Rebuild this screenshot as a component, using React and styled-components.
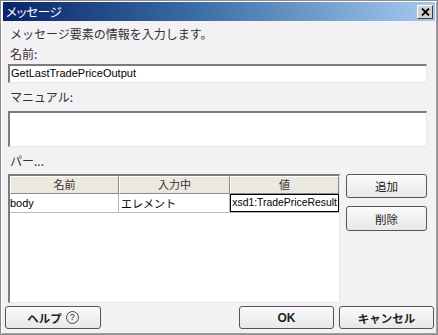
import React from "react";
import styled, { createGlobalStyle } from "styled-components";

const Global = createGlobalStyle`
  html, body { margin: 0; padding: 0; background: #ffffff; }
  * { box-sizing: border-box; }
`;

const jp = `"Noto Sans CJK JP", "Liberation Sans", sans-serif`;
const latin = `"Liberation Sans", "Noto Sans CJK JP", sans-serif`;

const Window = styled.div`
  width: 438px;
  height: 335px;
  background: #f3f1f4;
  border: 1px solid #8c8c8c;
  box-shadow: inset 1px 1px 0 #ffffff, inset -1px -1px 0 #a0a0a0;
  padding: 1px 2px 2px 2px;
  display: flex;
  flex-direction: column;
  font-family: ${jp};
  color: #222;
`;

const TitleBar = styled.div`
  height: 19px;
  background: linear-gradient(to right, #0a246a 0%, #3a6ea5 45%, #a6caf0 100%);
  display: flex;
  align-items: center;
  justify-content: space-between;
  padding: 0 2px 0 3px;
`;

const Title = styled.span`
  color: #ffffff;
  font-size: 12.5px;
  font-feature-settings: "palt";
  letter-spacing: -0.3px;
`;

const CloseButton = styled.div`
  width: 16px;
  height: 14px;
  background: #d4d0c8;
  border-top: 1px solid #ffffff;
  border-left: 1px solid #ffffff;
  border-right: 1px solid #404040;
  border-bottom: 1px solid #404040;
  display: flex;
  align-items: center;
  justify-content: center;
`;

const Body = styled.div`
  flex: 1;
  display: flex;
  flex-direction: column;
  padding: 0 8px 0 5px;
`;

const Description = styled.div`
  margin-top: 1px;
  height: 24px;
  line-height: 24px;
  font-size: 12px;
  padding-left: 2px;
  color: #333;
`;

const Label = styled.div`
  height: ${(p) => p.$h}px;
  line-height: ${(p) => p.$lh}px;
  font-size: 12px;
  padding-left: 2px;
  color: #333;
`;

const Field = styled.div`
  height: ${(p) => p.$h}px;
  background: #ffffff;
  border-top: 2px solid #7c7c7c;
  border-left: 2px solid #7c7c7c;
  border-right: 1px solid #e6e6e6;
  border-bottom: 1px solid #e6e6e6;
  font-family: ${latin};
  font-size: 11px;
  line-height: 15px;
  padding-left: 1px;
  color: #000;
`;

const MainRow = styled.div`
  flex: 1;
  display: flex;
  align-items: flex-start;
`;

const Table = styled.div`
  width: 332px;
  height: 129px;
  background: #ffffff;
  border-top: 2px solid #7c7c7c;
  border-left: 2px solid #7c7c7c;
  border-right: 1px solid #e6e6e6;
  border-bottom: 1px solid #e6e6e6;
  display: flex;
  flex-direction: column;
`;

const Row = styled.div`
  display: grid;
  grid-template-columns: 109px 111px 1fr;
  height: ${(p) => p.$h}px;
  border-bottom: ${(p) => (p.$line ? "1px solid #b8b8b8" : "none")};
`;

const HeadCell = styled.div`
  background: #ebe9df;
  border-top: 1px solid #ffffff;
  border-left: 1px solid #ffffff;
  border-right: 1px solid #8a8a8a;
  border-bottom: 1px solid #8a8a8a;
  font-size: 11px;
  line-height: 15px;
  text-align: center;
  color: #333;
`;

const Cell = styled.div`
  border-right: 1px solid #b8b8b8;
  font-family: ${(p) => (p.$jp ? jp : latin)};
  font-size: 11px;
  line-height: 18px;
  padding-left: ${(p) => (p.$jp ? 2 : 0)}px;
  white-space: nowrap;
  overflow: hidden;
  color: #000;
`;

const EditCell = styled.div`
  border: 1px solid #000000;
  display: flex;
  justify-content: flex-end;
  overflow: hidden;
  font-family: ${latin};
  font-size: 10.4px;
  line-height: 16px;
  white-space: nowrap;
  padding-right: 1px;
  color: #000;
`;

const SideButtons = styled.div`
  margin-left: 6px;
  display: flex;
  flex-direction: column;
  gap: 8px;
`;

const Button = styled.div`
  width: ${(p) => p.$w}px;
  height: ${(p) => p.$h}px;
  border: 1px solid #555555;
  border-radius: 3px;
  background: linear-gradient(#fafafa, #e8e8e8);
  display: flex;
  align-items: center;
  justify-content: center;
  gap: 4px;
  font-family: ${(p) => (p.$latin ? latin : jp)};
  font-size: ${(p) => (p.$latin ? 12 : 11.5)}px;
  font-weight: ${(p) => (p.$bold ? 700 : 400)};
  color: #222;
`;

const Footer = styled.div`
  height: 29px;
  display: flex;
  align-items: center;
  padding: 0 1px 0 2px;
  gap: 5px;
`;

const Spacer = styled.div`
  flex: 1;
`;

const HelpMark = styled.span`
  width: 13px;
  height: 13px;
  border: 1px solid #444;
  border-radius: 50%;
  font-family: ${latin};
  font-size: 9px;
  font-weight: 400;
  line-height: 11px;
  text-align: center;
`;

export default function App() {
  return (
    <>
      <Global />
      <Window>
        <TitleBar>
          <Title>メッセージ</Title>
          <CloseButton>
            <svg width="9" height="8" viewBox="0 0 9 8">
              <path d="M1 0.5 L8 7.5 M8 0.5 L1 7.5" stroke="#000" strokeWidth="1.8" />
            </svg>
          </CloseButton>
        </TitleBar>
        <Body>
          <Description>メッセージ要素の情報を入力します。</Description>
          <Label $h={18} $lh={15}>名前:</Label>
          <Field $h={19}>GetLastTradePriceOutput</Field>
          <Label $h={28} $lh={28}>マニュアル:</Label>
          <Field $h={36} />
          <Label $h={27} $lh={27}>パー...</Label>
          <MainRow>
            <Table>
              <Row $h={18}>
                <HeadCell>名前</HeadCell>
                <HeadCell>入力中</HeadCell>
                <HeadCell>値</HeadCell>
              </Row>
              <Row $h={19} $line>
                <Cell>body</Cell>
                <Cell $jp>エレメント</Cell>
                <EditCell>xsd1:TradePriceResult</EditCell>
              </Row>
            </Table>
            <SideButtons>
              <Button $w={81} $h={24}>追加</Button>
              <Button $w={81} $h={25}>削除</Button>
            </SideButtons>
          </MainRow>
        </Body>
        <Footer>
          <Button $w={96} $h={23} $bold>
            ヘルプ <HelpMark>?</HelpMark>
          </Button>
          <Spacer />
          <Button $w={95} $h={23} $bold $latin>OK</Button>
          <Button $w={95} $h={23} $bold>キャンセル</Button>
        </Footer>
      </Window>
    </>
  );
}
